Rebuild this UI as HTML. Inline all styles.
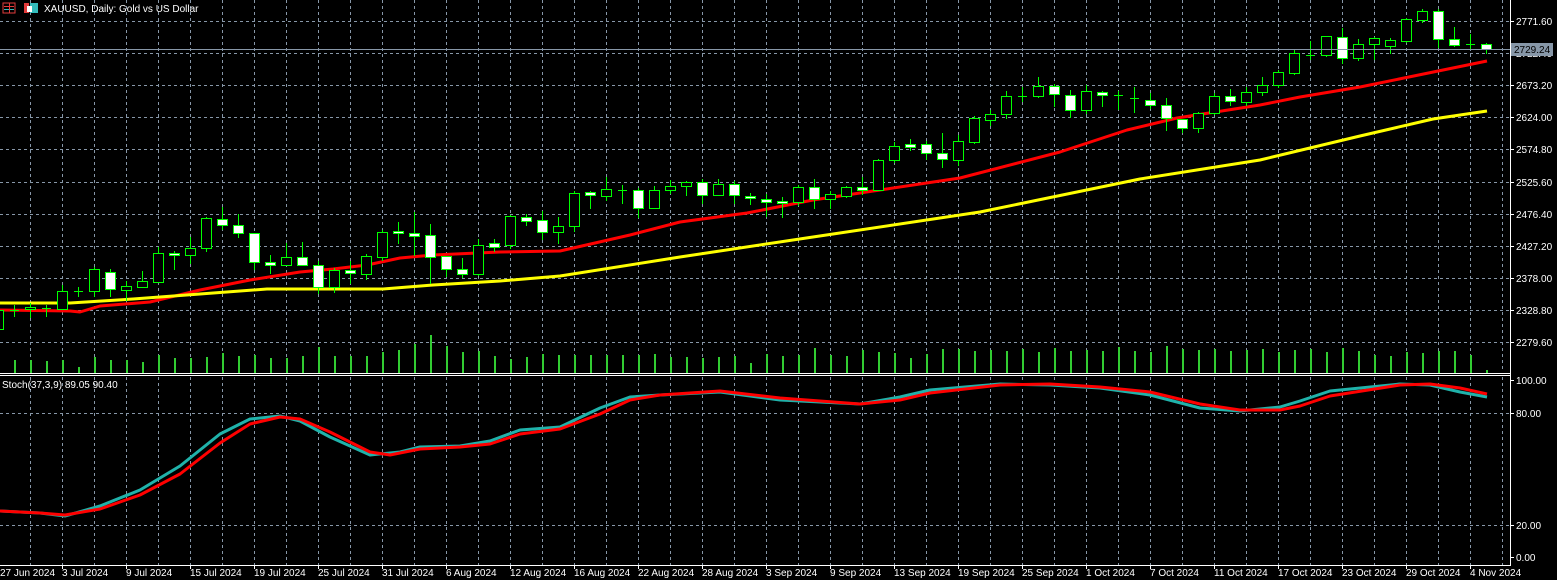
<!DOCTYPE html>
<html><head><meta charset="utf-8">
<style>
html,body{margin:0;padding:0;background:#000;width:1557px;height:580px;overflow:hidden}
svg{display:block}
text{font-family:"Liberation Sans",sans-serif;font-size:10px;fill:#fff}
</style></head>
<body>
<svg id="c" width="1557" height="580" xmlns="http://www.w3.org/2000/svg" shape-rendering="crispEdges">
<rect width="1557" height="580" fill="#000"/>
<g id="grid" stroke="#8797a8" stroke-width="1" stroke-dasharray="3,3"></g>
<g id="vol" fill="#32cd32"></g>
<g id="ma"></g>
<g id="candles" stroke="#00ff00" stroke-width="1"></g>
<line x1="0" y1="49.5" x2="1510" y2="49.5" stroke="#8797a8"/>
<line x1="0" y1="373.5" x2="1510" y2="373.5" stroke="#fff"/>
<line x1="0" y1="375.5" x2="1510" y2="375.5" stroke="#fff"/>
<line x1="1510.5" y1="0" x2="1510.5" y2="566" stroke="#fff"/>
<line x1="0" y1="565.5" x2="1511" y2="565.5" stroke="#fff"/>
<g id="stoch"></g>
<g id="ticks" stroke="#fff"></g>
<!-- header -->
<rect x="3" y="3" width="12" height="10" fill="none" stroke="#e23b3b"/>
<line x1="4" y1="6.5" x2="14" y2="6.5" stroke="#e23b3b"/><line x1="4" y1="9.5" x2="14" y2="9.5" stroke="#3bb"/><line x1="9.5" y1="3" x2="9.5" y2="13" stroke="#e23b3b"/>
<rect x="24" y="3" width="5" height="10" fill="#e23b3b"/><rect x="30" y="3" width="8" height="10" fill="#3bb"/><rect x="27" y="6" width="5" height="6" fill="#fff"/>
<text x="44" y="12" font-size="11">XAUUSD, Daily:  Gold vs US Dollar</text>
<text x="2" y="388">Stoch(37,3,9) 89.05 90.40</text>
<!-- price labels -->
<text x="1516" y="25">2771.60</text>
<text x="1516" y="57">2722.40</text>
<rect x="1511" y="43" width="42" height="13" fill="#8797a8"/>
<text x="1514" y="53" fill="#000" style="fill:#000">2729.24</text>
<text x="1516" y="89">2673.20</text>
<text x="1516" y="121">2624.00</text>
<text x="1516" y="153">2574.80</text>
<text x="1516" y="186">2525.60</text>
<text x="1516" y="218">2476.40</text>
<text x="1516" y="250">2427.20</text>
<text x="1516" y="282">2378.00</text>
<text x="1516" y="314">2328.80</text>
<text x="1516" y="346">2279.60</text>
<text x="1516" y="384">100.00</text>
<text x="1516" y="417">80.00</text>
<text x="1516" y="529">20.00</text>
<text x="1516" y="561">0.00</text>
<!-- dates -->
<text x="0" y="576">27 Jun 2024</text>
<text x="62" y="576">3 Jul 2024</text>
<text x="126" y="576">9 Jul 2024</text>
<text x="190" y="576">15 Jul 2024</text>
<text x="254" y="576">19 Jul 2024</text>
<text x="318" y="576">25 Jul 2024</text>
<text x="382" y="576">31 Jul 2024</text>
<text x="446" y="576">6 Aug 2024</text>
<text x="510" y="576">12 Aug 2024</text>
<text x="574" y="576">16 Aug 2024</text>
<text x="638" y="576">22 Aug 2024</text>
<text x="702" y="576">28 Aug 2024</text>
<text x="766" y="576">3 Sep 2024</text>
<text x="830" y="576">9 Sep 2024</text>
<text x="894" y="576">13 Sep 2024</text>
<text x="958" y="576">19 Sep 2024</text>
<text x="1022" y="576">25 Sep 2024</text>
<text x="1086" y="576">1 Oct 2024</text>
<text x="1150" y="576">7 Oct 2024</text>
<text x="1214" y="576">11 Oct 2024</text>
<text x="1278" y="576">17 Oct 2024</text>
<text x="1342" y="576">23 Oct 2024</text>
<text x="1406" y="576">29 Oct 2024</text>
<text x="1470" y="576">4 Nov 2024</text>
</svg>
<script>
var NS="http://www.w3.org/2000/svg";
function el(p,t,a){var e=document.createElementNS(NS,t);for(var k in a)e.setAttribute(k,a[k]);document.getElementById(p).appendChild(e);return e;}
var hy=[21,53,85,117,149,182,214,246,278,310,342,413,525];
hy.forEach(function(y){el("grid","line",{x1:0,y1:y+.5,x2:1510,y2:y+.5});});
for(var x=30;x<1510;x+=32){el("grid","line",{x1:x+.5,y1:0,x2:x+.5,y2:372});el("grid","line",{x1:x+.5,y1:377,x2:x+.5,y2:565});}
[21,53,85,117,149,182,214,246,278,310,342,380,413,525,557].forEach(function(y){el("ticks","line",{x1:1510,y1:y+.5,x2:1514,y2:y+.5});});
for(var t=-2;t<1510;t+=64){el("ticks","line",{x1:t+.5,y1:565,x2:t+.5,y2:569});}
var C=[[310,329,308,331,0],[310,310,305,316,0],[307,309,303,317,0],[308,308,305,316,0],[291,309,285,309,0],[291,291,287,296,0],[269,291,267,296,0],[272,289,269,296,1],[286,290,281,300,0],[281,287,271,287,0],[253,282,247,282,0],[253,255,251,269,1],[248,255,237,263,0],[218,248,217,251,0],[219,225,207,229,1],[225,233,214,237,1],[233,262,233,269,1],[262,265,255,273,1],[257,265,243,265,0],[257,265,242,265,1],[265,287,261,293,1],[270,287,268,292,0],[270,273,261,283,1],[256,274,254,279,0],[232,257,230,260,0],[231,233,222,243,1],[233,236,212,255,1],[235,257,224,283,1],[256,269,256,276,1],[269,274,258,277,1],[245,274,239,275,0],[243,247,239,251,1],[216,245,215,248,0],[217,221,214,225,1],[220,232,211,239,1],[226,232,217,243,0],[193,226,191,231,0],[192,195,191,208,1],[189,196,177,200,0],[190,190,185,203,0],[190,208,188,217,1],[190,208,186,208,0],[186,190,180,193,0],[182,186,181,195,0],[182,195,179,203,1],[184,195,179,195,0],[184,195,181,203,1],[196,198,193,204,1],[199,202,194,216,1],[201,203,197,217,1],[187,202,185,205,0],[187,199,179,208,1],[194,199,191,208,0],[187,196,186,197,0],[187,190,177,194,1],[160,190,159,190,0],[146,160,142,162,0],[144,147,139,150,1],[144,153,141,159,1],[153,159,133,167,1],[141,160,135,165,0],[118,142,116,143,0],[114,120,110,125,0],[96,114,91,118,0],[96,96,87,101,0],[86,96,77,97,0],[86,94,84,106,1],[95,110,90,117,1],[91,110,85,113,0],[92,95,91,106,1],[95,95,91,109,0],[98,98,87,112,0],[100,105,93,108,1],[105,118,98,130,1],[119,128,119,132,1],[113,128,112,132,0],[96,113,93,114,0],[96,101,89,105,1],[92,102,87,105,0],[85,92,77,95,0],[72,85,70,87,0],[53,73,50,74,0],[55,55,41,59,0],[36,55,36,56,0],[37,58,28,63,1],[44,58,39,60,0],[38,44,37,59,0],[40,46,38,53,0],[19,41,18,42,0],[11,20,9,22,0],[11,39,9,47,1],[39,45,27,46,1],[44,44,34,48,0],[44,49,43,53,1]];
C.forEach(function(c,i){var x=-2+16*i;
 el("candles","line",{x1:x+.5,y1:c[2],x2:x+.5,y2:c[3]+1});
 if(c[1]-c[0]<1){el("candles","line",{x1:x-4,y1:c[0]+.5,x2:x+5,y2:c[0]+.5});}
 else el("candles","rect",{x:x-4.5,y:c[0]+.5,width:10,height:c[1]-c[0],fill:c[4]?"#fff":"#000"});
});
var V=[360,360,361,360,367,357,360,360,362,355,358,358,357,353,356,355,358,358,356,347,356,356,356,352,350,344,335,346,352,351,356,359,357,354,355,355,355,355,355,355,354,357,357,358,357,356,363,354,356,355,348,355,356,350,352,353,358,354,349,349,351,350,351,349,352,348,351,350,351,347,351,352,346,349,350,349,351,350,349,352,350,349,352,348,351,355,356,352,353,351,351,355,370];
V.forEach(function(v,i){var x=14+16*i;el("vol","rect",{x:x,y:v,width:2,height:373-v});});
function pl(p,pts,col,w){el(p,"polyline",{points:pts,fill:"none",stroke:col,"stroke-width":w,"shape-rendering":"auto","stroke-linejoin":"round"});}
pl("ma","0,310 70,311 80,312 100,306 150,302 200,290 250,280 300,272 333,269 367,265 400,258 433,255 500,252 560,251 630,235 680,222 747,213 813,200 880,190 960,178 1060,152 1127,130 1177,118 1260,105 1300,97 1360,87 1487,61","#ff0000",3);
pl("ma","0,303 70,303 133,299 200,294 267,289 383,289 433,285 500,281 560,276 680,257 813,237 980,212 1140,179 1260,160 1360,136 1433,119 1487,111","#ffff00",3);
pl("stoch","0,511 40,513 65,516 100,506 140,490 180,466 220,434 250,419 280,416 300,421 330,437 370,455 400,452 420,447 460,446 490,441 520,430 560,427 600,408 630,397 660,395 720,392 780,400 860,404 900,397 930,390 1000,384 1050,385 1100,388 1150,395 1200,408 1240,411 1280,407 1300,401 1330,391 1400,384 1430,385 1460,392 1487,397","#20b2aa",3);
pl("stoch","0,511 40,513 65,515 100,509 140,495 180,474 220,443 250,424 280,417 300,419 330,432 370,452 390,455 420,449 460,447 490,444 520,434 560,429 600,414 630,400 660,395 720,391 780,398 860,404 900,400 930,393 1000,385 1050,384 1100,387 1150,392 1200,404 1240,410 1280,410 1300,406 1330,396 1400,385 1430,384 1460,388 1487,394","#ff0000",3);
</script>
</body></html>
